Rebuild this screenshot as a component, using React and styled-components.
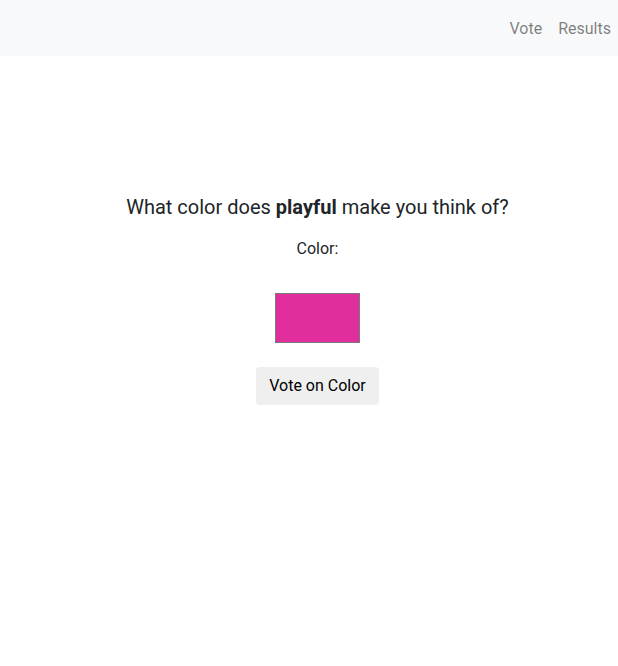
import React from "react"
import styled, { createGlobalStyle } from "styled-components"

const GlobalStyle = createGlobalStyle`
  body {
    margin: 0;
    font-family: Roboto, "Liberation Sans", sans-serif;
    color: #212529;
    background: #fff;
  }
`

const NavBar = styled.nav`
  height: 56px;
  background: #f8f9fa;
  display: flex;
  align-items: center;
  justify-content: flex-end;
  padding: 2px 7px 0 0;
  box-sizing: border-box;
  gap: 16px;
`

const NavLink = styled.a`
  font-size: 16px;
  line-height: 24px;
  color: rgba(0, 0, 0, 0.5);
  text-decoration: none;
  cursor: pointer;
`

const Main = styled.main`
  display: flex;
  flex-direction: column;
  align-items: center;
  padding: 136px 0 0 17px;
`

const Question = styled.h2`
  margin: 0;
  font-size: 20px;
  font-weight: 400;
  line-height: 30px;
  b {
    font-weight: 700;
  }
`

const Label = styled.label`
  margin-top: 15px;
  font-size: 16px;
  line-height: 24px;
`

const Swatch = styled.div`
  margin-top: 32px;
  width: 83px;
  height: 48px;
  border: 1px solid #7a7a7a;
  background: ${(p) => p.color};
`

const VoteButton = styled.button`
  margin-top: 24px;
  font-family: inherit;
  font-size: 16px;
  line-height: 24px;
  padding: 7px 13px;
  border: none;
  border-radius: 4px;
  background: #efefef;
  color: #000;
  cursor: pointer;
`

const App = () => (
  <>
    <GlobalStyle />
    <NavBar>
      <NavLink>Vote</NavLink>
      <NavLink>Results</NavLink>
    </NavBar>
    <Main>
      <Question>
        What color does <b>playful</b> make you think of?
      </Question>
      <Label>Color:</Label>
      <Swatch color="#e02e9c" />
      <VoteButton>Vote on Color</VoteButton>
    </Main>
  </>
)

export default App
